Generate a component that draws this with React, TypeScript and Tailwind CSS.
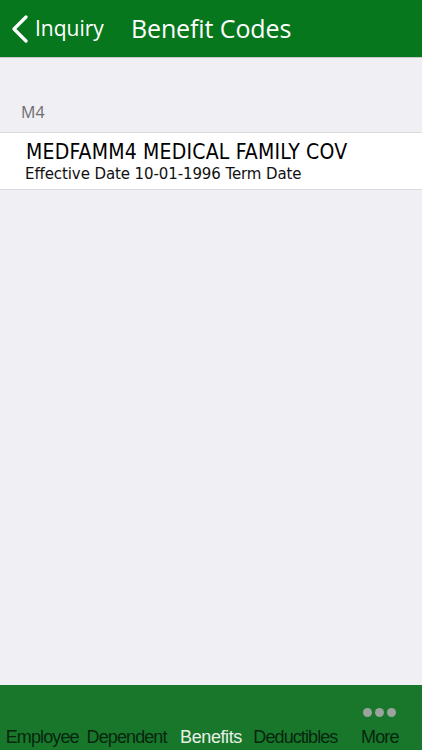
export default function App() {
  const tabs = ["Employee", "Dependent", "Benefits", "Deductibles", "More"];

  return (
    <div className="flex h-[750px] w-[422px] flex-col bg-[#efeff4] font-['Liberation_Sans',sans-serif]">
      {/* nav bar */}
      <div className="flex h-[58px] items-center border-b border-[#c8c7cc] bg-[#07771d] text-white">
        <div className="flex items-center pl-[11px]">
          <svg width="18" height="28" viewBox="0 0 18 28" fill="none">
            <path d="M15 2 L3 14 L15 26" stroke="white" strokeWidth="3.2" strokeLinecap="round" strokeLinejoin="round" />
          </svg>
          <span className="ml-[6px] text-[21px] font-['Open_Sans',sans-serif] tracking-[0px]">Inquiry</span>
        </div>
        <span className="ml-[27px] text-[25px] font-['Open_Sans',sans-serif] tracking-[-0.1px]">Benefit Codes</span>
      </div>

      {/* list */}
      <div className="flex-1">
        <div className="px-[21px] pt-[42px] pb-[8px] text-[16px] text-[#6d6d72] font-['Open_Sans',sans-serif]">M4</div>
        <div className="border-y border-[#d9d9de] bg-white px-[25px] pt-[6px] pb-[5px]">
          <div className="pl-[1px] text-[21px] leading-[26px] text-black font-['DejaVu_Sans_Condensed','DejaVu_Sans',sans-serif] tracking-[0.2px]">
            MEDFAMM4 MEDICAL FAMILY COV
          </div>
          <div className="text-[15px] leading-[19px] text-[#111] font-['DejaVu_Sans',sans-serif] tracking-[-0.1px]">
            Effective Date 10-01-1996 Term Date
          </div>
        </div>
      </div>

      {/* tab bar */}
      <div className="grid h-[65px] grid-cols-5 bg-[#19772c]">
        {tabs.map((t) => (
          <div key={t} className="flex flex-col items-center justify-end pb-[1px]">
            {t === "More" && (
              <div className="mb-[9px] flex gap-[3px]">
                <span className="h-[9px] w-[9px] rounded-full bg-[#9aa39c]" />
                <span className="h-[9px] w-[9px] rounded-full bg-[#9aa39c]" />
                <span className="h-[9px] w-[9px] rounded-full bg-[#9aa39c]" />
              </div>
            )}
            <span
              className={
                t === "Benefits"
                  ? "text-[18px] leading-[23px] tracking-[-0.4px] text-[#e6f0e6]"
                  : "text-[18px] leading-[23px] tracking-[-0.9px] text-[#06270c]"
              }
            >
              {t}
            </span>
          </div>
        ))}
      </div>
    </div>
  );
}
